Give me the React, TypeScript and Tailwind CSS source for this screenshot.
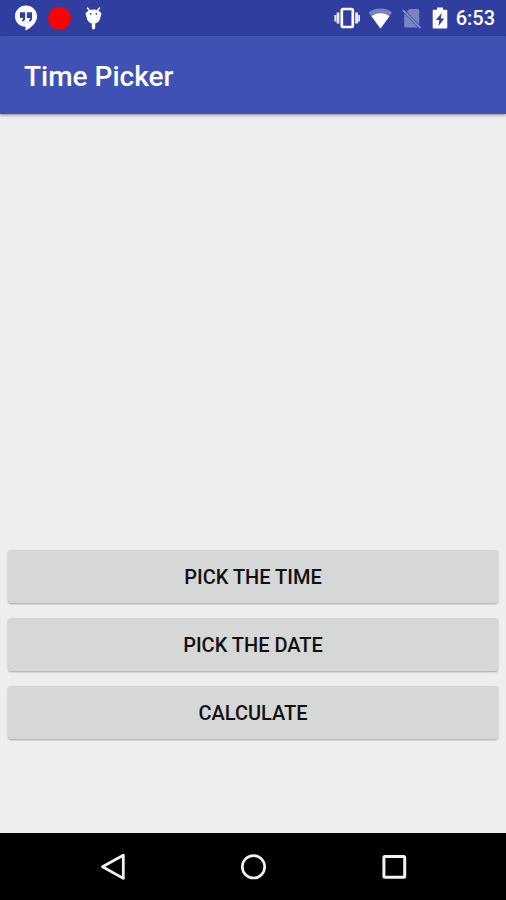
function HangoutsIcon() {
  return (
    <svg viewBox="0 0 28 28" className="size-7" aria-hidden="true">
      <path d="M14 1.500C7.900 1.500 3 6.300 3 12.200s4.700 10.500 10.500 10.600V26.500c5.600-2.600 11.500-7.700 11.500-14.300C25 6.300 20.100 1.500 14 1.500z" fill="#fff" />
      <path d="M8 8.200h5.200v5.800c0 2-1 3.300-2.900 3.700v-1.900c.7-.3 1-.9 1-1.800H8zM14.900 8.200h5.200v5.800c0 2-1 3.300-2.900 3.700v-1.900c.7-.3 1-.9 1-1.800h-3.300z" fill="#303f9f" />
    </svg>
  )
}

function RecordIcon() {
  return (
    <svg viewBox="0 0 28 28" className="size-7" aria-hidden="true">
      <circle cx="13.500" cy="14.300" r="11.300" fill="#fe0000" />
    </svg>
  )
}

function DebugIcon() {
  return (
    <svg viewBox="0 0 28 28" className="size-7" aria-hidden="true">
      <path d="M7.500 4l2.300 3M19.500 4l-2.300 3" stroke="#fff" strokeWidth="1.500" strokeLinecap="round" />
      <path d="M5.500 9.500C7.500 6.600 10 5.500 13.500 5.500s6 1.100 8 4l-1 3.500c-.5 3.600-2.400 5.700-5.300 6.600v4.200a1.700 1.700 0 0 1-3.400 0v-4.200C8.900 18.700 7 16.600 6.500 13z" fill="#fff" />
      <circle cx="10.600" cy="9.900" r=".9" fill="#303f9f" />
      <circle cx="16.400" cy="9.900" r=".9" fill="#303f9f" />
    </svg>
  )
}

function VibrateIcon() {
  return (
    <svg viewBox="0 0 28 28" className="size-7" aria-hidden="true">
      <rect x="9.800" y="5" width="11" height="18" rx="1.500" fill="none" stroke="#fff" strokeWidth="2.700" />
      <path d="M6 8.500v11M24.600 8.500v11" stroke="#fff" strokeOpacity=".9" strokeWidth="2.800" />
      <path d="M3.400 11v6.400M27.200 11v6.400" stroke="#fff" strokeOpacity=".9" strokeWidth="2" />
    </svg>
  )
}

function WifiIcon() {
  return (
    <svg viewBox="0 0 24 28" className="h-7 w-6" aria-hidden="true">
      <path d="M12.500 24.500L.5 8.500C4 6 8 4.600 12.500 4.600S21.500 6 24 8.500z" fill="#fff" fillOpacity=".35" />
      <path d="M12.500 24.500L3.500 12.300c2.700-2 5.700-3.100 9-3.100s6.300 1.100 9 3.100z" fill="#fff" />
    </svg>
  )
}

function NoSimIcon() {
  return (
    <svg viewBox="0 0 24 28" className="h-7 w-6" aria-hidden="true">
      <path d="M9.800 5H18a1.200 1.200 0 0 1 1.200 1.200v14.300L6.800 7.800zM4.200 9.500L17.700 23.400H5.400a1.200 1.200 0 0 1-1.200-1.200z" fill="#fff" fillOpacity=".36" />
      <path d="M2.800 6l17.700 18" stroke="#fff" strokeOpacity=".4" strokeWidth="1.800" />
    </svg>
  )
}

function BatteryIcon() {
  return (
    <svg viewBox="0 0 16 28" className="h-7 w-4" aria-hidden="true">
      <path d="M5 3.500h6v2.300h3.200c.6 0 1.100.5 1.100 1.100v16.600c0 .6-.5 1.100-1.100 1.100H1.800c-.6 0-1.100-.5-1.100-1.100V6.900c0-.6.500-1.100 1.100-1.100H5z" fill="#fff" />
      <path d="M9.700 9L3.800 16h3.500l-.8 6 5.800-7.500H8.800z" fill="#303f9f" />
    </svg>
  )
}

const actions = ['Pick the time', 'Pick the date', 'Calculate']

export default function App() {
  return (
    <div className="flex min-h-screen flex-col bg-[#eeeeee] font-[Roboto,sans-serif]">
      <div className="flex h-9 items-center justify-between bg-[#303f9f] pr-[11px] pl-3 text-white">
        <div className="flex items-center gap-1.5">
          <HangoutsIcon />
          <RecordIcon />
          <DebugIcon />
        </div>
        <div className="flex items-center gap-2">
          <VibrateIcon />
          <WifiIcon />
          <NoSimIcon />
          <BatteryIcon />
          <span className="text-[20px] leading-7 font-medium">6:53</span>
        </div>
      </div>

      <header className="flex h-[78px] items-center bg-[#3f51b5] px-6 pt-1 shadow-[0_1px_3px_rgba(0,0,0,0.45)]">
        <h1 className="text-[28px] leading-8 font-medium text-white">Time Picker</h1>
      </header>

      <main className="flex flex-1 flex-col justify-end gap-[15px] px-2 pb-[94px]">
        {actions.map(label => (
          <button
            key={label}
            type="button"
            className="h-[53px] w-full rounded-[3px] bg-[#d6d8d7] text-[20px] leading-6 font-medium text-[#111111] uppercase shadow-[0_1px_2px_rgba(0,0,0,0.3)]"
          >
            {label}
          </button>
        ))}
      </main>

      <nav className="flex h-[67px] bg-black px-[42px]">
        <button type="button" aria-label="Back" className="flex flex-1 items-center justify-center">
          <svg viewBox="0 0 28 28" className="size-7">
            <path d="M25.300 2.200v23.200L4.500 13.800z" fill="none" stroke="#f2f2f2" strokeWidth="2.800" strokeLinejoin="round" />
          </svg>
        </button>
        <button type="button" aria-label="Home" className="flex flex-1 items-center justify-center">
          <svg viewBox="0 0 28 28" className="size-7">
            <circle cx="14.500" cy="13.800" r="11.200" fill="none" stroke="#f2f2f2" strokeWidth="2.700" />
          </svg>
        </button>
        <button type="button" aria-label="Overview" className="flex flex-1 items-center justify-center">
          <svg viewBox="0 0 28 28" className="size-7">
            <rect x="3.900" y="3.400" width="20.800" height="20.800" rx="1" fill="none" stroke="#f2f2f2" strokeWidth="3" />
          </svg>
        </button>
      </nav>
    </div>
  )
}
